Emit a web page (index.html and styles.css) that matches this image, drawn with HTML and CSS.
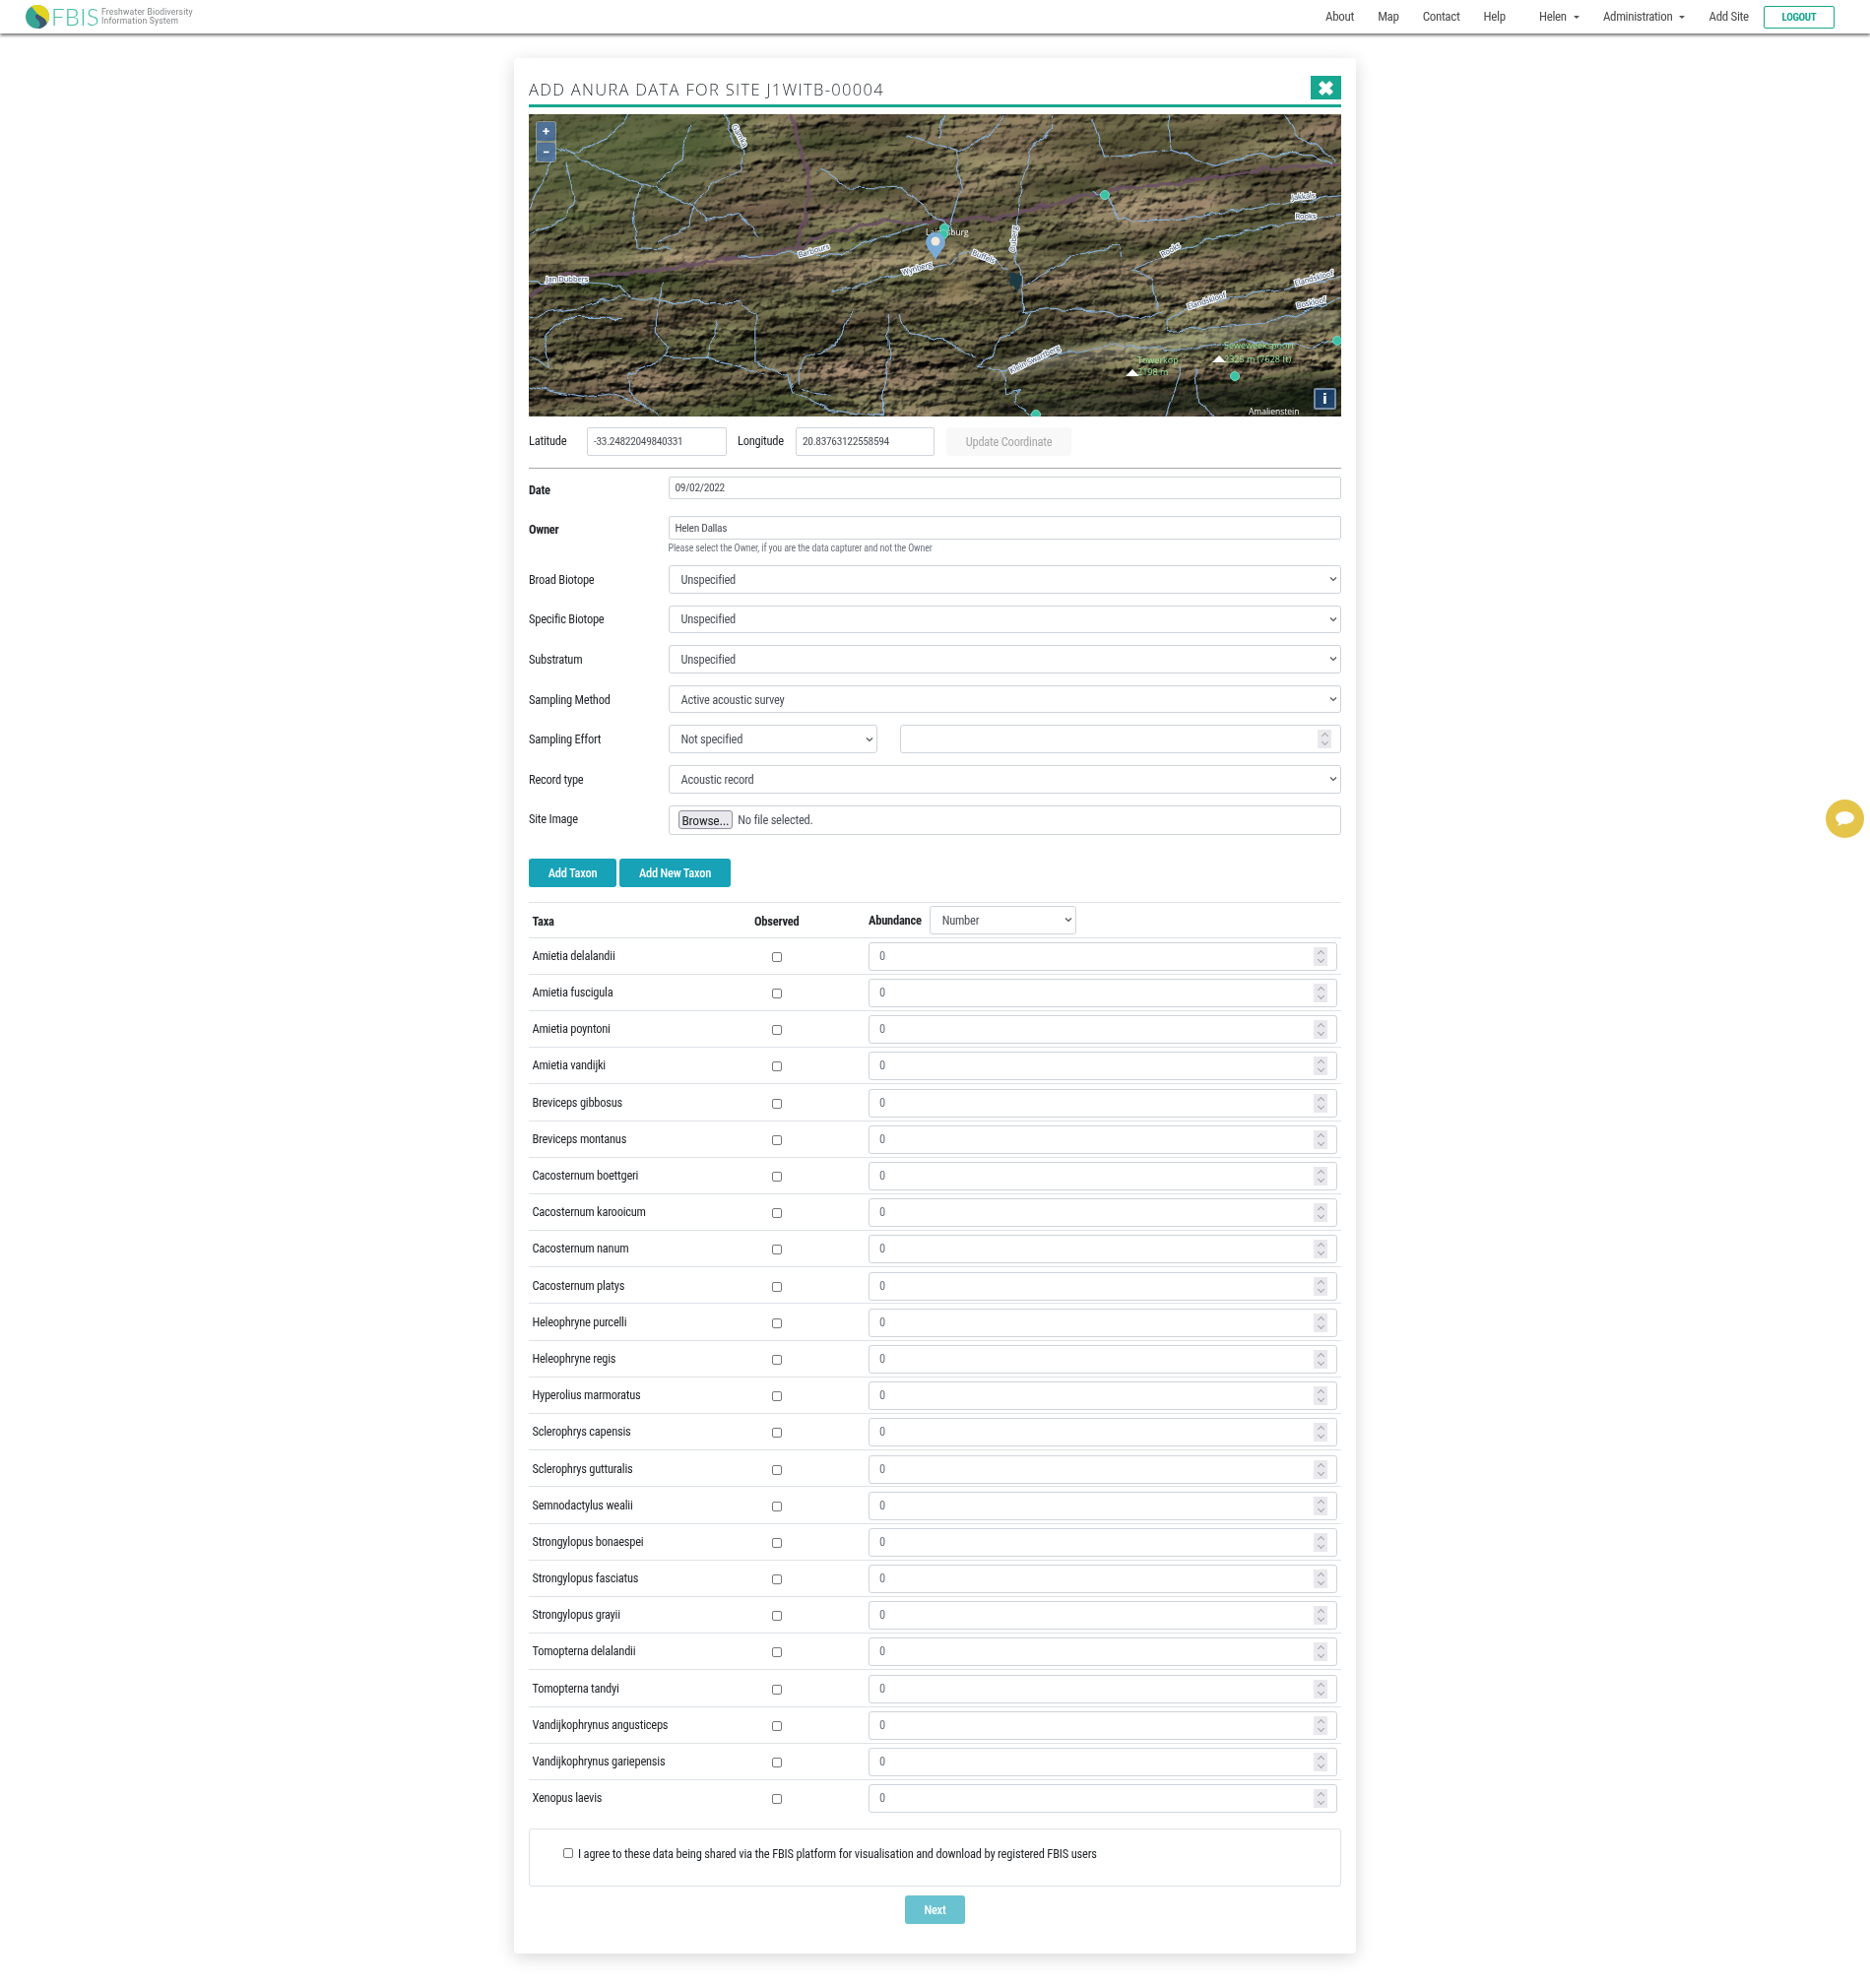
FILE: index.html
```html
<!DOCTYPE html>
<html lang="en">
<head>
    <meta charset="UTF-8">
    <title>FBIS - Add Anura Data</title>
    <link rel="stylesheet" href="styles.css">
</head>
<body>
    <nav class="navbar">
        <a class="brand" href="#">
            <svg class="brand-logo" viewBox="0 0 24 24">
                <circle cx="12" cy="12" r="12" fill="#38a594"/>
                <path d="M6 1.6A12 12 0 0 1 24 12c0 3-1 5-2.500 7C21 13 15 12 12.500 9.500 10 7 8 4.500 6 1.600z" fill="#e3d51f"/>
                <path d="M12.500 9.500C15 12 21 13 21.500 19A12 12 0 0 1 12 24c4-2 3-7-.5-9.500C9 12.500 9.500 9.500 12.500 9.500z" fill="#3f5672"/>
            </svg>
            <span class="brand-name">FBIS</span>
            <span class="brand-tag">Freshwater Biodiversity<br>Information System</span>
        </a>
        <div class="nav-links">
            <a href="#">About</a>
            <a href="#">Map</a>
            <a href="#">Contact</a>
            <a href="#">Help</a>
            <a href="#" class="nav-user dropdown">Helen</a>
            <a href="#" class="dropdown">Administration</a>
            <a href="#">Add Site</a>
            <a href="#" class="btn-logout">LOGOUT</a>
        </div>
    </nav>

    <main class="card">
        <div class="card-head">
            <h2>ADD ANURA DATA FOR SITE J1WITB-00004</h2>
            <button class="btn-close" type="button">
                <svg viewBox="0 0 14 14"><path d="M1.500 4 4 1.500 7 4.500 10 1.500 12.500 4 9.500 7 12.500 10 10 12.500 7 9.500 4 12.500 1.500 10 4.500 7z" fill="#fff" stroke="#fff" stroke-width="1" stroke-linejoin="round"/></svg>
            </button>
        </div>

        <div class="map">
            <svg class="map-svg" width="825" height="307" viewBox="0 0 825 307">
                <defs>
                    <filter id="terrain" x="0" y="0" width="100%" height="100%" color-interpolation-filters="sRGB">
                        <feTurbulence type="fractalNoise" baseFrequency="0.012 0.075" numOctaves="3" seed="11" result="bands"/>
                        <feTurbulence type="fractalNoise" baseFrequency="0.11 0.13" numOctaves="3" seed="5" result="gullies"/>
                        <feComposite in="bands" in2="gullies" operator="arithmetic" k1="0" k2=".62" k3=".38" k4="0" result="n"/>
                        <feDiffuseLighting in="n" surfaceScale="8" diffuseConstant="1.25" lighting-color="#fff" result="light">
                            <feDistantLight azimuth="235" elevation="50"/>
                        </feDiffuseLighting>
                        <feTurbulence type="fractalNoise" baseFrequency="0.007 0.03" numOctaves="3" seed="4" result="c"/>
                        <feColorMatrix in="c" type="matrix" values=".62 0 0 0 .16  .52 .14 0 0 .11  .46 0 0 0 .09  0 0 0 0 1" result="col"/>
                        <feBlend in="light" in2="col" mode="multiply"/>
                    </filter>
                    <filter id="peaks" x="0" y="0" width="100%" height="100%" color-interpolation-filters="sRGB">
                        <feTurbulence type="fractalNoise" baseFrequency="0.02 0.09" numOctaves="2" seed="23" result="bands"/>
                        <feTurbulence type="fractalNoise" baseFrequency="0.085 0.09" numOctaves="3" seed="9" result="gullies"/>
                        <feComposite in="bands" in2="gullies" operator="arithmetic" k1="0" k2=".55" k3=".45" k4="0" result="n"/>
                        <feDiffuseLighting in="n" surfaceScale="10" diffuseConstant="1.4" lighting-color="#fff">
                            <feDistantLight azimuth="240" elevation="45"/>
                        </feDiffuseLighting>
                    </filter>
                    <filter id="wiggle" filterUnits="userSpaceOnUse" x="0" y="0" width="825" height="307">
                        <feTurbulence type="fractalNoise" baseFrequency="0.06" numOctaves="2" seed="3"/>
                        <feDisplacementMap in="SourceGraphic" scale="9" xChannelSelector="R" yChannelSelector="G"/>
                    </filter>
                    <filter id="soft"><feGaussianBlur stdDeviation="7"/></filter>
                    <filter id="softer"><feGaussianBlur stdDeviation="22"/></filter>
                    <linearGradient id="peakFade" x1="0" y1="0" x2="0" y2="1">
                        <stop offset="0" stop-color="#000"/>
                        <stop offset=".42" stop-color="#222"/>
                        <stop offset=".56" stop-color="#999"/>
                        <stop offset=".8" stop-color="#eee"/>
                        <stop offset="1" stop-color="#bbb"/>
                    </linearGradient>
                    <mask id="peakMask"><rect width="825" height="307" fill="url(#peakFade)"/></mask>
                </defs>

                <g transform="rotate(-5 412 153)"><rect x="-40" y="-50" width="905" height="407" filter="url(#terrain)"/></g>
                <g mask="url(#peakMask)" class="map-multiply"><rect width="825" height="307" filter="url(#peaks)"/></g>
                <ellipse cx="90" cy="30" rx="120" ry="55" fill="#4c6034" opacity=".6" filter="url(#softer)"/>
                <ellipse cx="600" cy="25" rx="150" ry="30" fill="#5a5038" opacity=".45" filter="url(#softer)"/>
                <path d="M0 150C100 140 200 165 300 135" stroke="#d6c999" stroke-width="10" fill="none" opacity=".4" filter="url(#soft)"/>
                <path d="M0 215C120 205 300 210 470 195" stroke="#24200f" stroke-width="16" fill="none" opacity=".25" filter="url(#soft)"/>
                <path d="M210 150C300 145 400 130 560 150S760 130 825 110" stroke="#d9cf9f" stroke-width="8" fill="none" opacity=".25" filter="url(#soft)"/>
                <path d="M470 265C540 240 620 240 700 225S790 205 825 205" stroke="#f3ebc9" stroke-width="10" fill="none" opacity=".65" filter="url(#soft)"/>
                <path d="M470 295C560 280 640 285 825 262L825 307 470 307z" fill="#11130b" opacity=".65" filter="url(#soft)"/>
                <path d="M418 172 C 420 165 450 160 452 175 L 445 188 L 420 188z" fill="#a89468" opacity=".7" filter="url(#soft)"/>

                <g filter="url(#wiggle)">
                    <g transform="scale(.5485 .3333) translate(-31 -168)">
                        <g class="road">
                            <path d="M31 725 90 660 200 655 330 625 420 605 530 575 590 530 680 495 780 495 900 485 1000 440 1100 400 1200 385 1300 360 1400 335 1535 320"/>
                            <path d="M515 168 545 330 552 400 530 575"/>
                        </g>
                        <path d="M915 655 945 660 935 715 925 690z" fill="#1b3a44"/>
                        <g class="river">
                            <path d="M215 168C190 230 150 260 115 290L85 270"/>
                            <path d="M115 290 170 340 260 395 330 440 360 490 420 470 460 545"/>
                            <path d="M395 168 400 215 430 290 420 340 375 375 335 440"/>
                            <path d="M330 200 315 300 265 385"/>
                            <path d="M240 380 225 480 230 575 300 580"/>
                            <path d="M335 450 330 510 270 555"/>
                            <path d="M570 340 620 390 720 395 770 465 800 500 820 530"/>
                            <path d="M730 230 825 280 830 400 810 510"/>
                            <path d="M800 168 790 235M910 168 880 235 825 285"/>
                            <path d="M1000 170 1000 210 960 280 945 370 935 490 930 600 945 660 945 770"/>
                            <path d="M1075 185 1095 300 1220 280 1300 325 1390 290 1480 290 1520 320M1215 170 1220 280M1430 170 1450 230 1490 260 1525 310"/>
                            <path d="M1075 400 1100 420 1125 490 1220 490 1330 465 1440 435 1535 415"/>
                            <path d="M1535 475 1400 510 1300 545 1210 600 1150 640 1185 670 1195 760"/>
                            <path d="M420 600 530 590 610 595 650 560 770 500"/>
                            <path d="M590 710 730 650 810 625 830 590 880 600 915 640"/>
                            <path d="M950 690 1040 600 1125 565 1130 600"/>
                            <path d="M1210 795 1250 760 1350 720 1535 665"/>
                            <path d="M1215 830 1350 810 1430 790 1535 730M1210 795 1215 830"/>
                            <path d="M945 770 1000 760 1100 770 1160 795 1205 765"/>
                            <path d="M960 770 950 810 905 850 890 900 860 940 910 950 915 1020 940 1010 930 1050 970 1088"/>
                            <path d="M910 950 1010 900 1130 870 1250 885 1350 860 1450 870 1480 880 1530 855"/>
                            <path d="M265 790 265 830 290 880 280 910 215 960 220 1010 270 1088"/>
                            <path d="M60 850 100 790 200 790M60 850 70 940 31 905"/>
                            <path d="M280 680 265 790M280 910 360 910 470 960M360 910 380 800M420 740 450 780 450 920 510 960 520 1020 590 1070 690 1088"/>
                            <path d="M695 780 700 900 690 1000 690 1088"/>
                            <path d="M630 760 600 870 540 910 525 990"/>
                            <path d="M720 780 730 830 800 860 860 910"/>
                            <path d="M1240 935 1210 1088M1265 950 1270 1040 1300 1088"/>
                            <path d="M31 460 60 360 85 280M100 320 115 420 100 490 31 535"/>
                            <path d="M31 680 100 680 200 690 220 725"/>
                            <path d="M31 780 120 760 200 720 280 740 420 740"/>
                            <path d="M31 1000 130 1030 180 1020 250 1050M530 1000 590 1030"/>
                        </g>
                    </g>
                </g>

                <g class="map-label">
                    <text transform="translate(290 141) rotate(-16)">Barbours</text>
                    <text transform="translate(395 159) rotate(-16)">Wynberg</text>
                    <text transform="translate(461 147) rotate(22)">Buffels</text>
                    <text transform="translate(39 170)">Jan Dubbers</text>
                    <text transform="translate(495 127) rotate(-85)">Ouberg</text>
                    <text transform="translate(212 23) rotate(62)">Gamka</text>
                    <text transform="translate(787 86) rotate(-6)">Jakkals</text>
                    <text transform="translate(789 106)">Rooks</text>
                    <text transform="translate(653 140) rotate(-30)">Rooks</text>
                    <text transform="translate(689 192) rotate(-18)">Elandskloof</text>
                    <text transform="translate(798 169) rotate(-16)">Elandskloof</text>
                    <text transform="translate(795 194) rotate(-12)">Boskloof</text>
                    <text transform="translate(515 251) rotate(-26)">Klein-Swartberg</text>
                </g>
                <text class="town" x="403" y="123">Laingsburg</text>
                <text class="town" x="731" y="305">Amalienstein</text>
                <text class="peak" x="618" y="253">Towerkop</text>
                <text class="peak" x="618" y="265">2198 m</text>
                <text class="peak" x="706" y="238">Seweweekspoort</text>
                <text class="peak" x="706" y="252">2325 m (7628 ft)</text>
                <path d="M613 259 620 266 606 266z M701 245 708 252 694 252z" fill="#fff"/>

                <g fill="#3cc3a6" stroke="#7fd8c6" stroke-width="1">
                    <circle cx="422" cy="116" r="4.500"/>
                    <circle cx="421" cy="122" r="4.500"/>
                    <circle cx="585" cy="82" r="4.500"/>
                    <circle cx="717" cy="266" r="4.500"/>
                    <circle cx="821" cy="230" r="4.500"/>
                    <circle cx="515" cy="305" r="4.500"/>
                </g>
                <path d="M413 148C409 140 403 135 403 130a10 10 0 0 1 20 0c0 5-6 10-10 18z" fill="#79aedd" opacity=".95"/>
                <circle cx="413" cy="129" r="4.500" fill="#f1e8da"/>
            </svg>
            <div class="map-zoom">
                <button type="button">+</button>
                <button type="button">&minus;</button>
            </div>
            <button class="map-info" type="button">i</button>
        </div>

        <div class="coord-row">
            <label class="coord-lat">Latitude</label>
            <input class="field field-lat" type="text" value="-33.24822049840331">
            <label class="coord-lon">Longitude</label>
            <input class="field field-lon" type="text" value="20.83763122558594">
            <button class="btn-update" type="button">Update Coordinate</button>
        </div>
        <hr class="rule">

        <div class="form-row row-date">
            <label class="bold">Date</label>
            <input class="field field-sm" type="text" value="09/02/2022">
        </div>
        <div class="form-row row-owner">
            <label class="bold">Owner</label>
            <input class="field field-sm" type="text" value="Helen Dallas">
        </div>
        <small class="help">Please select the Owner, if you are the data capturer and not the Owner</small>

        <div class="form-row">
            <label>Broad Biotope</label>
            <select class="select"><option>Unspecified</option></select>
        </div>
        <div class="form-row">
            <label>Specific Biotope</label>
            <select class="select"><option>Unspecified</option></select>
        </div>
        <div class="form-row">
            <label>Substratum</label>
            <select class="select"><option>Unspecified</option></select>
        </div>
        <div class="form-row">
            <label>Sampling Method</label>
            <select class="select"><option>Active acoustic survey</option></select>
        </div>
        <div class="form-row">
            <label>Sampling Effort</label>
            <div class="effort">
                <select class="select"><option>Not specified</option></select>
                <div class="num"><span class="num-value"></span><span class="spin"></span></div>
            </div>
        </div>
        <div class="form-row">
            <label>Record type</label>
            <select class="select"><option>Acoustic record</option></select>
        </div>
        <div class="form-row row-file">
            <label>Site Image</label>
            <div class="file"><button type="button">Browse...</button><span>No file selected.</span></div>
        </div>

        <div class="taxon-buttons">
            <button class="btn-taxon add-taxon" type="button">Add Taxon</button>
            <button class="btn-taxon add-new" type="button">Add New Taxon</button>
        </div>

        <div class="taxa">
            <div class="taxa-head">
                <div class="bold">Taxa</div>
                <div class="bold">Observed</div>
                <div class="abundance"><span class="bold">Abundance</span><select class="select"><option>Number</option></select></div>
            </div>
            <div class="taxa-row"><div>Amietia delalandii</div><input class="check" type="checkbox"><div class="num"><span class="num-value">0</span><span class="spin"></span></div></div>
            <div class="taxa-row"><div>Amietia fuscigula</div><input class="check" type="checkbox"><div class="num"><span class="num-value">0</span><span class="spin"></span></div></div>
            <div class="taxa-row"><div>Amietia poyntoni</div><input class="check" type="checkbox"><div class="num"><span class="num-value">0</span><span class="spin"></span></div></div>
            <div class="taxa-row"><div>Amietia vandijki</div><input class="check" type="checkbox"><div class="num"><span class="num-value">0</span><span class="spin"></span></div></div>
            <div class="taxa-row"><div>Breviceps gibbosus</div><input class="check" type="checkbox"><div class="num"><span class="num-value">0</span><span class="spin"></span></div></div>
            <div class="taxa-row"><div>Breviceps montanus</div><input class="check" type="checkbox"><div class="num"><span class="num-value">0</span><span class="spin"></span></div></div>
            <div class="taxa-row"><div>Cacosternum boettgeri</div><input class="check" type="checkbox"><div class="num"><span class="num-value">0</span><span class="spin"></span></div></div>
            <div class="taxa-row"><div>Cacosternum karooicum</div><input class="check" type="checkbox"><div class="num"><span class="num-value">0</span><span class="spin"></span></div></div>
            <div class="taxa-row"><div>Cacosternum nanum</div><input class="check" type="checkbox"><div class="num"><span class="num-value">0</span><span class="spin"></span></div></div>
            <div class="taxa-row"><div>Cacosternum platys</div><input class="check" type="checkbox"><div class="num"><span class="num-value">0</span><span class="spin"></span></div></div>
            <div class="taxa-row"><div>Heleophryne purcelli</div><input class="check" type="checkbox"><div class="num"><span class="num-value">0</span><span class="spin"></span></div></div>
            <div class="taxa-row"><div>Heleophryne regis</div><input class="check" type="checkbox"><div class="num"><span class="num-value">0</span><span class="spin"></span></div></div>
            <div class="taxa-row"><div>Hyperolius marmoratus</div><input class="check" type="checkbox"><div class="num"><span class="num-value">0</span><span class="spin"></span></div></div>
            <div class="taxa-row"><div>Sclerophrys capensis</div><input class="check" type="checkbox"><div class="num"><span class="num-value">0</span><span class="spin"></span></div></div>
            <div class="taxa-row"><div>Sclerophrys gutturalis</div><input class="check" type="checkbox"><div class="num"><span class="num-value">0</span><span class="spin"></span></div></div>
            <div class="taxa-row"><div>Semnodactylus wealii</div><input class="check" type="checkbox"><div class="num"><span class="num-value">0</span><span class="spin"></span></div></div>
            <div class="taxa-row"><div>Strongylopus bonaespei</div><input class="check" type="checkbox"><div class="num"><span class="num-value">0</span><span class="spin"></span></div></div>
            <div class="taxa-row"><div>Strongylopus fasciatus</div><input class="check" type="checkbox"><div class="num"><span class="num-value">0</span><span class="spin"></span></div></div>
            <div class="taxa-row"><div>Strongylopus grayii</div><input class="check" type="checkbox"><div class="num"><span class="num-value">0</span><span class="spin"></span></div></div>
            <div class="taxa-row"><div>Tomopterna delalandii</div><input class="check" type="checkbox"><div class="num"><span class="num-value">0</span><span class="spin"></span></div></div>
            <div class="taxa-row"><div>Tomopterna tandyi</div><input class="check" type="checkbox"><div class="num"><span class="num-value">0</span><span class="spin"></span></div></div>
            <div class="taxa-row"><div>Vandijkophrynus angusticeps</div><input class="check" type="checkbox"><div class="num"><span class="num-value">0</span><span class="spin"></span></div></div>
            <div class="taxa-row"><div>Vandijkophrynus gariepensis</div><input class="check" type="checkbox"><div class="num"><span class="num-value">0</span><span class="spin"></span></div></div>
            <div class="taxa-row"><div>Xenopus laevis</div><input class="check" type="checkbox"><div class="num"><span class="num-value">0</span><span class="spin"></span></div></div>
        </div>

        <div class="agree">
            <input class="check" type="checkbox">
            <span>I agree to these data being shared via the FBIS platform for visualisation and download by registered FBIS users</span>
        </div>
        <div class="next-wrap"><button class="btn-next" type="button">Next</button></div>
    </main>

    <button class="chat" type="button">
        <svg viewBox="0 0 24 24"><path d="M12 5c5 0 9 2.500 9 6s-4 6-9 6c-.9 0-1.700-.1-2.500-.2C8.300 18 6.500 19 4.500 19c1-1 1.500-2.200 1.500-3.500C4 14.300 3 12.800 3 11c0-3.500 4-6 9-6z" fill="#fff"/></svg>
    </button>
</body>
</html>
```

FILE: styles.css
```css
* {
    box-sizing: border-box;
}

body {
    margin: 0;
    background: #fff;
    color: #212529;
    font-family: Roboto, sans-serif;
    font-stretch: 75%;
    font-size: 12.5px;
    letter-spacing: -0.25px;
}

button, input, select {
    font: inherit;
    letter-spacing: inherit;
    color: inherit;
}

.bold {
    font-weight: 700;
}

/* navbar */
.navbar {
    display: flex;
    align-items: center;
    height: 34px;
    padding: 0 36px 0 26px;
    background: #fff;
    box-shadow: 0 2px 3px rgba(0, 0, 0, 0.55);
}
.brand {
    display: flex;
    align-items: center;
    text-decoration: none;
}
.brand-logo {
    width: 24px;
    height: 24px;
}
.brand-name {
    margin-left: 2px;
    color: #45bfa6;
    font-family: Lato, sans-serif;
    font-stretch: normal;
    font-weight: 300;
    font-size: 24px;
    letter-spacing: 0.3px;
    line-height: 1;
}
.brand-tag {
    margin-left: 2px;
    color: #808285;
    font-stretch: normal;
    font-size: 8.5px;
    letter-spacing: 0.2px;
    line-height: 9px;
}
.nav-links {
    display: flex;
    align-items: center;
    gap: 24.200px;
    margin-left: auto;
}
.nav-links a {
    padding-bottom: 2px;
    color: #4a4a4a;
    font-size: 13px;
    letter-spacing: -0.35px;
    text-decoration: none;
}
.nav-links .nav-user {
    margin-left: 10px;
}
.nav-links .dropdown::after {
    content: "";
    display: inline-block;
    margin-left: 7px;
    vertical-align: 2px;
    border-top: 3.5px solid #555;
    border-left: 3.5px solid transparent;
    border-right: 3.5px solid transparent;
}
.nav-links .btn-logout {
    display: flex;
    align-items: center;
    justify-content: center;
    width: 72px;
    height: 23px;
    margin-left: -9px;
    padding-bottom: 0;
    border: 1px solid #18a78f;
    border-radius: 2px;
    color: #18a78f;
    font-size: 11px;
    font-weight: 700;
}

/* card */
.card {
    width: 855px;
    margin: 25px auto 35px;
    padding: 18px 15px 30px;
    background: #fff;
    border-radius: 4px;
    box-shadow: 0 4px 18px rgba(0, 0, 0, 0.16);
}
.card-head {
    display: flex;
    align-items: flex-start;
    justify-content: space-between;
    height: 32px;
    border-bottom: 3px solid #18a78f;
}
.card-head h2 {
    margin: 4px 0 0;
    color: #2b3035;
    font-family: "Open Sans", sans-serif;
    font-stretch: normal;
    font-weight: 300;
    font-size: 16.500px;
    letter-spacing: 1.32px;
    line-height: 20px;
}
.btn-close {
    display: flex;
    align-items: center;
    justify-content: center;
    width: 31px;
    height: 24px;
    padding: 0;
    border: 0;
    background: #18a78f;
}
.btn-close svg {
    width: 17px;
    height: 17px;
}

/* map */
.map {
    position: relative;
    height: 307px;
    margin-top: 7px;
    overflow: hidden;
    background: #6b5a3f;
}
.map-svg {
    display: block;
}
.map-multiply {
    mix-blend-mode: multiply;
}
.road path {
    fill: none;
    stroke: #6a5064;
    stroke-width: 3.5;
    stroke-opacity: 0.85;
    vector-effect: non-scaling-stroke;
}
.river path {
    fill: none;
    stroke: #86acd2;
    stroke-width: 1.2;
    stroke-linejoin: round;
    vector-effect: non-scaling-stroke;
}
.map-label text {
    fill: #39485a;
    stroke: #eef3f8;
    stroke-width: 2.5px;
    paint-order: stroke;
    font-family: "Open Sans", sans-serif;
    font-stretch: normal;
    font-size: 7.5px;
    letter-spacing: 0;
    text-anchor: middle;
}
.town {
    fill: #f2f2f2;
    font-family: "Open Sans", sans-serif;
    font-stretch: normal;
    font-size: 8.500px;
    letter-spacing: 0;
}
.peak {
    fill: #8fe39a;
    font-family: "Open Sans", sans-serif;
    font-stretch: normal;
    font-size: 9px;
    letter-spacing: 0;
}
.map-zoom {
    position: absolute;
    left: 7px;
    top: 7px;
    display: flex;
    flex-direction: column;
    gap: 2px;
    padding: 1px;
    border-radius: 3px;
    background: rgba(255, 255, 255, 0.4);
}
.map-zoom button, .map-info {
    width: 19px;
    height: 19px;
    padding: 0;
    border: 0;
    border-radius: 2px;
    background: rgba(30, 85, 160, 0.6);
    color: #fff;
    font-stretch: normal;
    font-weight: 700;
    font-size: 13px;
    line-height: 19px;
    letter-spacing: 0;
}
.map-info {
    position: absolute;
    right: 5px;
    bottom: 7px;
    width: 23px;
    height: 22px;
    border: 2px solid rgba(255, 255, 255, 0.4);
    font-family: "DejaVu Sans", sans-serif;
    font-size: 14px;
    line-height: 18px;
}

/* fields */
.field {
    border: 1px solid #ced4da;
    border-radius: 2px;
    background: #fff;
    color: #495057;
    outline: none;
}
.coord-row {
    display: flex;
    align-items: center;
    height: 29px;
    margin-top: 11px;
}
.coord-lat {
    width: 59px;
    padding-bottom: 2px;
}
.coord-lon {
    width: 59px;
    padding-bottom: 2px;
}
.field-lat, .field-lon {
    height: 29px;
    padding: 0 6px 2px;
    font-size: 11.500px;
    letter-spacing: -0.35px;
}
.field-lat {
    width: 142px;
    margin-right: 11px;
}
.field-lon {
    width: 141px;
}
.btn-update {
    width: 127px;
    height: 29px;
    margin-left: 12px;
    border: 0;
    border-radius: 4px;
    background: #f8f8f8;
    color: #a6a6a6;
}
.rule {
    height: 0;
    margin: 12px 0 0;
    border: 0;
    border-top: 1px solid #a8a8a8;
}
.form-row {
    display: grid;
    grid-template-columns: 141.500px 1fr;
    align-items: center;
    height: 28.600px;
    margin-bottom: 12px;
}
.row-date {
    height: 23px;
    margin-top: 8px;
    margin-bottom: 17px;
}
.row-owner {
    height: 24px;
    margin-bottom: 0;
}
.row-date label {
    padding: 4px 0 0;
}
.row-owner label {
    padding: 3px 0 0;
}
.row-file {
    height: 30px;
    margin-bottom: 0;
}
.row-file label {
    padding-bottom: 2px;
}
.field-sm {
    width: 100%;
    height: 100%;
    padding: 0 6px 1px;
    font-size: 11.500px;
    letter-spacing: -0.35px;
}
.help {
    display: block;
    height: 26px;
    padding: 3px 0 0 141.500px;
    color: #6c757d;
    font-size: 10px;
    letter-spacing: -0.15px;
    line-height: 12px;
}
.select {
    width: 100%;
    height: 100%;
    padding: 0 12px;
    appearance: none;
    border: 1px solid #ced4da;
    border-radius: 3px;
    background: #fff url("data:image/svg+xml,%3Csvg xmlns='http://www.w3.org/2000/svg' width='8' height='6'%3E%3Cpath d='M1 1.500 4 4.500 7 1.500' fill='none' stroke='%23555' stroke-width='1.200'/%3E%3C/svg%3E") no-repeat right 3px center;
    color: #495057;
}
.effort {
    display: grid;
    grid-template-columns: 212.500px 448px;
    justify-content: space-between;
    height: 100%;
}
.num {
    display: flex;
    align-items: center;
    justify-content: space-between;
    height: 29px;
    padding: 0 9px 0 10px;
    border: 1px solid #ced4da;
    border-radius: 3px;
    color: #6c757d;
}
.num-value {
    padding-bottom: 2px;
}
.spin {
    position: relative;
    width: 14px;
    height: 19px;
    background: #e9e9ed;
}
.spin::before, .spin::after {
    content: "";
    position: absolute;
    left: 5px;
    width: 4px;
    height: 4px;
    border: solid #a3a3a9;
    border-width: 1px 0 0 1px;
    transform: rotate(45deg);
}
.spin::before {
    top: 4px;
}
.spin::after {
    bottom: 4px;
    transform: rotate(225deg);
}
.file {
    display: flex;
    align-items: center;
    height: 100%;
    padding-left: 9px;
    border: 1px solid #ced4da;
    border-radius: 3px;
    color: #495057;
}
.file button {
    height: 19px;
    margin-right: 5px;
    padding: 0 3px;
    border: 1px solid #8f8f9d;
    border-radius: 3px;
    background: #e9e9ed;
    color: #212529;
    font-size: 13.500px;
    line-height: 16px;
}
.file span {
    font-size: 12.500px;
}

/* taxa table */
.taxon-buttons {
    display: flex;
    gap: 3px;
    margin-top: 24px;
}
.btn-taxon {
    height: 29px;
    border: 0;
    border-radius: 3px;
    background: #17a2b8;
    color: #fff;
    font-weight: 500;
}
.add-taxon {
    width: 89px;
}
.add-new {
    width: 113px;
}
.taxa {
    margin-top: 15px;
}
.taxa-head, .taxa-row {
    display: grid;
    grid-template-columns: 229px 116px 476px;
    align-items: center;
    border-top: 1px solid #dee2e6;
}
.taxa-head {
    height: 36px;
}
.taxa-head > .bold {
    padding-top: 2px;
}
.taxa-row {
    height: 37.200px;
    padding-top: 1.500px;
}
.taxa-row > :first-child {
    padding-bottom: 2px;
}
.taxa-head > :first-child, .taxa-row > :first-child {
    padding-left: 3.500px;
}
.abundance {
    display: flex;
    align-items: center;
    height: 29px;
}
.abundance .select {
    width: 149px;
    margin-left: 8px;
}
.check {
    width: 10px;
    height: 10px;
    margin: 1px 0 0 18px;
    appearance: none;
    border: 1px solid #767676;
    border-radius: 2px;
    background: #fff;
}
.agree {
    display: flex;
    align-items: flex-start;
    height: 59px;
    margin-top: 13px;
    padding: 17px 0 0 34px;
    border: 1px solid #dee2e6;
    border-radius: 3px;
    letter-spacing: -0.2px;
}
.agree .check {
    margin: 2px 5px 0 0;
    flex: none;
}
.next-wrap {
    display: flex;
    justify-content: center;
    margin-top: 9px;
}
.btn-next {
    width: 61px;
    height: 29px;
    border: 0;
    border-radius: 3px;
    background: #68c2d0;
    color: #fff;
    font-weight: 500;
}

/* chat bubble */
.chat {
    position: absolute;
    left: 1854px;
    top: 812px;
    display: flex;
    align-items: center;
    justify-content: center;
    width: 39px;
    height: 39px;
    padding: 0;
    border: 0;
    border-radius: 50%;
    background: #e5c44a;
}
.chat svg {
    width: 25px;
    height: 25px;
}
```
